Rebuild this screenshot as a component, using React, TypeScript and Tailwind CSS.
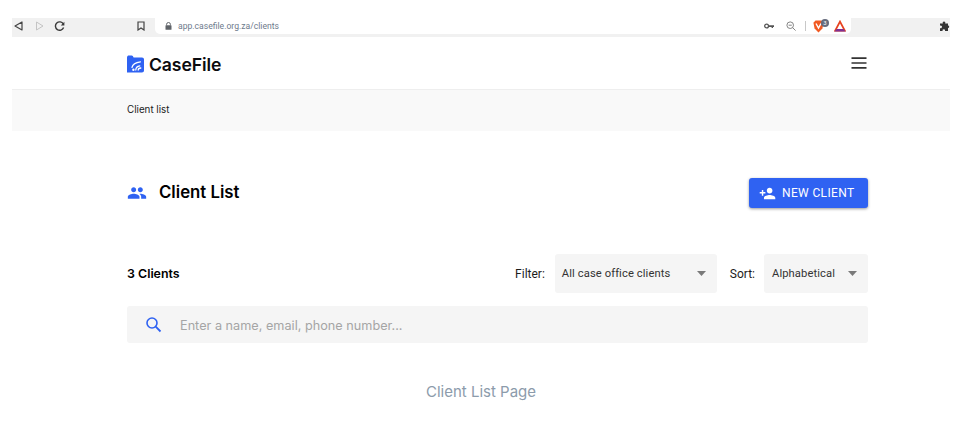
import React from "react";

function Logo() {
  return (
    <svg className="translate-y-[1px]" width="17" height="18" viewBox="0 0 17 18">
      <path d="M0 2.6 C0 1 .8 .4 2 .4 H4.6 C5.8 .4 6 1.2 6.6 2.4 H15 C16.2 2.4 17 3.2 17 4.4 V15.4 C17 16.6 16.2 17.4 15 17.4 H0 Z" fill="#2f62f2" />
      <circle cx="6.4" cy="14.8" r="1.2" fill="#ffffff" />
      <path d="M8.8 15 C8.8 12.8 10.4 11.2 12.8 10.8 M5 12.4 C5.6 9.4 8.6 7.4 13.4 6.8 M11.2 15 C11.2 13.8 12 13.2 13.8 13" fill="none" stroke="#ffffff" strokeWidth="1.3" strokeLinecap="round" />
    </svg>
  );
}

function Caret() {
  return (
    <svg width="9" height="5" viewBox="0 0 9 5">
      <path d="M0 0 H9 L4.5 5 Z" fill="#7a7a7a" />
    </svg>
  );
}

function ChromeBar() {
  return (
    <div className="flex h-[19px] bg-[#f1f1f1]">
      <div className="flex w-[143px] shrink-0 items-center pb-[3px]">
        <svg className="ml-[2px]" width="9" height="10" viewBox="0 0 9 10">
          <path d="M8 1 V9 L1 5 Z" fill="none" stroke="#444444" strokeWidth="1.2" strokeLinejoin="round" />
        </svg>
        <svg className="ml-[12px]" width="9" height="10" viewBox="0 0 9 10">
          <path d="M1.5 1 V9 L8 5 Z" fill="none" stroke="#c4c4c4" strokeWidth="1" strokeLinejoin="round" />
        </svg>
        <svg className="ml-[10px]" width="11" height="11" viewBox="0 0 11 11">
          <path d="M9.3 3 A4.2 4.2 0 1 0 9.6 6.5" fill="none" stroke="#3c3c3c" strokeWidth="1.4" />
          <path d="M10.4 .8 V4.4 H6.8 Z" fill="#3c3c3c" />
        </svg>
        <svg className="ml-[72px]" width="8" height="10" viewBox="0 0 8 10">
          <path d="M1 1 H7 V9 L4 7 L1 9 Z" fill="none" stroke="#444444" strokeWidth="1.2" />
        </svg>
      </div>
      <div className="flex h-[16px] w-[696px] shrink-0 items-center rounded-b-[5px] bg-white pl-[10px]">
        <svg width="7" height="8" viewBox="0 0 7 8">
          <path d="M1.6 3.4 V2.4 A1.9 1.9 0 0 1 5.4 2.4 V3.4" fill="none" stroke="#5f6368" strokeWidth="1" />
          <rect x="0.5" y="3.2" width="6" height="4.6" rx=".6" fill="#5f6368" />
        </svg>
        <span className="ml-[6px] text-[8.6px] leading-none tracking-[0px] text-[#6d7a8c] [font-family:'Roboto',sans-serif]">
          app.casefile.org.za/clients
        </span>
        <div className="ml-auto flex items-center">
          <svg width="10" height="6" viewBox="0 0 10 6">
            <circle cx="2.6" cy="3" r="1.9" fill="none" stroke="#555555" strokeWidth="1.3" />
            <path d="M4.5 2.2 H10 V4 H9 V5 H7.6 V4 H4.5 Z" fill="#555555" />
          </svg>
          <svg className="ml-[12px]" width="10" height="10" viewBox="0 0 10 10">
            <circle cx="4.2" cy="4.2" r="3.3" fill="none" stroke="#777777" strokeWidth="0.9" />
            <path d="M6.6 6.6 L9.6 9.6 M2.6 4.2 H5.8" fill="none" stroke="#777777" strokeWidth="0.9" />
          </svg>
          <div className="ml-[9px] h-[10px] w-px bg-[#c8c8c8]" />
          <div className="relative ml-[7px] h-[13px] w-[13px]">
            <svg width="11" height="13" viewBox="0 0 11 13">
              <path d="M2.5 .6 H8.5 L10.6 2.8 L9.4 8.6 L5.5 12.6 L1.6 8.6 L.4 2.8 Z" fill="#f15a22" />
              <path d="M3 3.5 L5.5 8 L8 3.5" fill="none" stroke="#ffffff" strokeWidth="1.4" />
            </svg>
            <div className="absolute left-[8px] top-[-1px] flex h-[8px] w-[8px] items-center justify-center rounded-full bg-[#666b7c] text-[6px] leading-none text-white [font-family:'Roboto',sans-serif]">
              3
            </div>
          </div>
          <svg className="ml-[8px] mr-[5px]" width="12" height="12" viewBox="0 0 12 12">
            <path d="M6 1.6 L10.8 10.6 H1.2 Z" fill="none" stroke="#e8431f" strokeWidth="1.8" />
            <path d="M.3 11.4 L2.6 9 H9.4 L11.7 11.4 Z" fill="#7f2f92" />
          </svg>
        </div>
      </div>
      <div className="flex flex-1 items-center justify-end pb-[3px]">
        <svg width="10" height="10" viewBox="0 0 10 10">
          <path d="M0 2.4 H2.8 A1.3 1.3 0 1 1 5.2 2.4 H8 V4.6 A1.2 1.2 0 1 1 8 7 V10 H5 A1.3 1.3 0 1 0 2.6 10 H0 V7 A1.3 1.3 0 1 0 0 4.8 Z" fill="#333333" />
        </svg>
      </div>
    </div>
  );
}

export default function App() {
  return (
    <div className="h-[431px] w-[965px] overflow-hidden bg-white pl-3 pr-[15px] pt-[18px] [font-family:'Inter',sans-serif]">
      <ChromeBar />
      <header className="flex h-[53px] items-center border-b border-[#eeeeee] pl-[115px] pr-[83px]">
        <Logo />
        <span className="ml-[5px] translate-y-[2px] text-[17.6px] font-semibold leading-none tracking-[-0.1px] text-[#0b0b0f]">CaseFile</span>
        <svg className="ml-auto" width="16" height="12" viewBox="0 0 16 12">
          <path d="M.5 1.2 H15.5 M.5 6 H15.5 M.5 10.8 H15.5" fill="none" stroke="#333333" strokeWidth="1.7" />
        </svg>
      </header>
      <div className="flex h-[41px] items-center bg-[#f9f9f9] pl-[115px] text-[9.8px] text-[#222222]">Client list</div>

      <main className="w-[856px] pl-[115px]">
        <div className="mt-[47px] flex h-[30px] items-center justify-between">
          <div className="flex items-center">
            <svg width="20" height="20" viewBox="0 0 24 24" fill="#2f62f2">
              <path d="M16 11c1.66 0 2.99-1.34 2.99-3S17.66 5 16 5c-1.66 0-3 1.34-3 3s1.34 3 3 3zm-8 0c1.66 0 2.99-1.34 2.99-3S9.66 5 8 5C6.34 5 5 6.34 5 8s1.34 3 3 3zm0 2c-2.33 0-7 1.17-7 3.5V19h14v-2.5c0-2.33-4.67-3.5-7-3.5zm8 0c-.29 0-.62.02-.97.05 1.16.84 1.97 1.97 1.97 3.45V19h6v-2.5c0-2.33-4.67-3.5-7-3.5z" />
            </svg>
            <h1 className="ml-[12px] -translate-y-[1px] text-[16.8px] font-semibold leading-none text-black">Client List</h1>
          </div>
          <button className="flex h-[30px] w-[119px] items-center rounded-[3px] bg-[#2f62f2] pl-[10px] text-[12px] tracking-[0.35px] text-white shadow-[0_1px_3px_rgba(0,0,0,0.4)] [font-family:'Roboto',sans-serif]">
            <svg className="mr-[6px]" width="17" height="17" viewBox="0 0 24 24" fill="#ffffff">
              <path d="M15 12c2.21 0 4-1.79 4-4s-1.79-4-4-4-4 1.79-4 4 1.79 4 4 4zm-9-2V7H4v3H1v2h3v3h2v-3h3v-2H6zm9 4c-2.67 0-8 1.34-8 4v2h16v-2c0-2.66-5.33-4-8-4z" />
            </svg>
            NEW CLIENT
          </button>
        </div>

        <div className="mt-[46px] flex h-[39px] items-center">
          <span className="translate-y-[1px] text-[12.4px] font-semibold text-black">3 Clients</span>
          <div className="ml-auto flex items-center text-[12px] [font-family:'Roboto',sans-serif]">
            <span className="text-[#1c1c1c]">Filter:</span>
            <div className="ml-[10px] flex h-[39px] w-[162px] items-center justify-between rounded-[3px] bg-[#f5f5f5] pl-[7px] pr-[11px] text-[11.2px] tracking-[0.1px] text-[#333333]">
              <span className="translate-y-[1px]">All case office clients</span>
              <Caret />
            </div>
            <span className="ml-[13px] text-[#1c1c1c]">Sort:</span>
            <div className="ml-[9px] flex h-[39px] w-[104px] items-center justify-between rounded-[3px] bg-[#f5f5f5] pl-[8px] pr-[11px] text-[11.2px] tracking-[0.1px] text-[#333333]">
              <span className="translate-y-[1px]">Alphabetical</span>
              <Caret />
            </div>
          </div>
        </div>

        <div className="mt-[13px] flex h-[37px] items-center rounded-[3px] bg-[#f5f5f5] pl-[18px]">
          <svg width="17" height="17" viewBox="0 0 17 17">
            <circle cx="7" cy="7" r="5" fill="none" stroke="#2f62f2" strokeWidth="1.6" />
            <path d="M10.7 10.7 L15.5 15.5" fill="none" stroke="#2f62f2" strokeWidth="1.8" />
          </svg>
          <span className="ml-[18px] translate-y-[1px] text-[12.7px] text-[#a5a5a5]">Enter a name, email, phone number...</span>
        </div>
      </main>

      <div className="mt-[41px] text-center text-[15px] leading-none text-[#8c9bab]">Client List Page</div>
    </div>
  );
}
